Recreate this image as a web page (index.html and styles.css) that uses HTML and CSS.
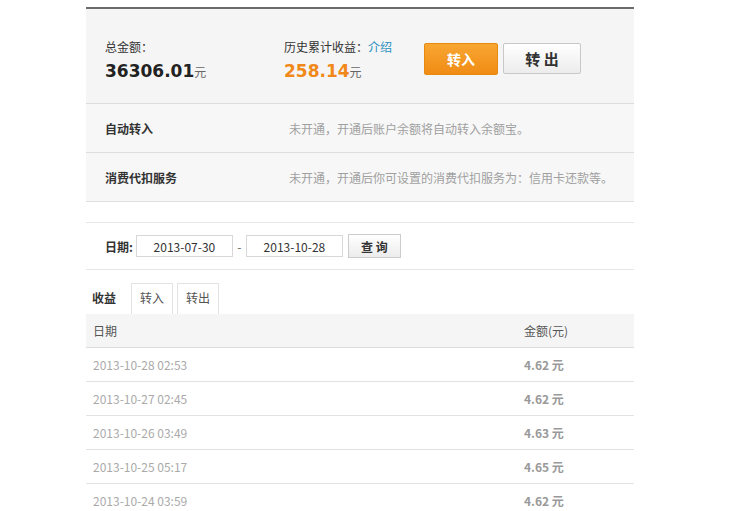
FILE: index.html
```html
<!DOCTYPE html>
<html>
  <head>
    <title>余额宝</title>
    <meta charset="UTF-8">
    <link rel="stylesheet" href="styles.css">
  </head>

  <body>
    <div class="wrap">
      <div class="summary">
        <div class="total">
          <div class="label">总金额：</div>
          <div class="amount">36306.01<span class="unit">元</span></div>
        </div>
        <div class="profit">
          <div class="label">历史累计收益：<a href="#">介绍</a></div>
          <div class="amount orange">258.14<span class="unit">元</span></div>
        </div>
        <div class="actions">
          <button class="btn-in">转入</button>
          <button class="btn-out">转 出</button>
        </div>
      </div>

      <div class="service">
        <div class="service-name">自动转入</div>
        <div class="service-desc">未开通，开通后账户余额将自动转入余额宝。</div>
      </div>
      <div class="service">
        <div class="service-name">消费代扣服务</div>
        <div class="service-desc">未开通，开通后你可设置的消费代扣服务为：信用卡还款等。</div>
      </div>

      <div class="filter">
        <span class="filter-label">日期:</span>
        <input class="date" type="text" value="2013-07-30">
        <span class="dash">-</span>
        <input class="date" type="text" value="2013-10-28">
        <button class="btn-query">查 询</button>
      </div>

      <div class="tabs">
        <div class="tab active">收益</div>
        <div class="tab">转入</div>
        <div class="tab">转出</div>
      </div>

      <table class="records">
        <thead>
          <tr><th>日期</th><th class="money">金额(元)</th></tr>
        </thead>
        <tbody>
          <tr><td>2013-10-28 02:53</td><td class="money">4.62 元</td></tr>
          <tr><td>2013-10-27 02:45</td><td class="money">4.62 元</td></tr>
          <tr><td>2013-10-26 03:49</td><td class="money">4.63 元</td></tr>
          <tr><td>2013-10-25 05:17</td><td class="money">4.65 元</td></tr>
          <tr><td>2013-10-24 03:59</td><td class="money">4.62 元</td></tr>
        </tbody>
      </table>
    </div>
  </body>
</html>
```

FILE: styles.css
```css
body {
  margin: 0;
  padding: 0;
  background-color: #fff;
  font-family: "Noto Sans CJK SC", "Liberation Sans", sans-serif;
  font-size: 12px;
  color: #333;
}

.wrap {
  width: 548px;
  margin: 7px 0 0 86px;
}

.summary {
  display: flex;
  height: 94px;
  padding: 0 0 0 19px;
  background-color: #f5f5f5;
  border-top: 2px solid #6b6b6b;
  border-bottom: 1px solid #dcdcdc;
}

.total {
  width: 179px;
  padding-top: 29px;
}

.profit {
  width: 140px;
  padding-top: 29px;
}

.label {
  height: 18px;
  line-height: 18px;
  color: #333;
}

.label a {
  color: #2a8fbd;
  text-decoration: none;
}

.amount {
  margin-top: 3px;
  font-family: "DejaVu Sans", Verdana, sans-serif;
  font-size: 17px;
  font-weight: bold;
  color: #222;
  line-height: 24px;
}

.amount.orange {
  color: #f0891a;
}

.unit {
  font-family: "Noto Sans CJK SC", sans-serif;
  font-size: 12px;
  font-weight: normal;
  color: #666;
}

.actions {
  display: flex;
  padding-top: 34px;
}

button {
  font-family: "Noto Sans CJK SC", sans-serif;
  cursor: pointer;
}

.btn-in {
  width: 74px;
  height: 32px;
  border: 1px solid #e88a10;
  border-radius: 2px;
  background: linear-gradient(#f8a632, #f08c15);
  color: #fff;
  font-size: 14px;
  font-weight: bold;
}

.btn-out {
  width: 78px;
  height: 31px;
  margin-left: 5px;
  border: 1px solid #c8c8c8;
  border-radius: 2px;
  background: linear-gradient(#ffffff, #ececec);
  color: #333;
  font-size: 15px;
  font-weight: bold;
}

.service {
  display: flex;
  align-items: center;
  height: 48px;
  padding-left: 19px;
  background-color: #f7f7f7;
  border-bottom: 1px solid #dedede;
}

.service-name {
  width: 184px;
  font-weight: bold;
  color: #333;
}

.service-desc {
  color: #a0a0a0;
}

.filter {
  display: flex;
  align-items: center;
  height: 46px;
  margin-top: 20px;
  padding-left: 19px;
  border-top: 1px solid #e6e6e6;
  border-bottom: 1px solid #e6e6e6;
}

.filter-label {
  margin-right: 3px;
  font-weight: bold;
  color: #333;
}

.date {
  width: 95px;
  height: 20px;
  padding: 0;
  border: 1px solid #d8d8d8;
  font-family: "Noto Sans CJK SC", "Liberation Sans", sans-serif;
  font-size: 12px;
  color: #333;
  text-align: center;
}

.dash {
  width: 13px;
  text-align: center;
  color: #666;
}

.btn-query {
  width: 53px;
  height: 24px;
  margin-left: 5px;
  border: 1px solid #ccc;
  background: linear-gradient(#fff, #ececec);
  color: #333;
  font-size: 12px;
  font-weight: bold;
}

.tabs {
  display: flex;
  margin-top: 13px;
  height: 31px;
}

.tab {
  width: 40px;
  height: 30px;
  line-height: 28px;
  margin-right: 4px;
  border: 1px solid #e3e3e3;
  border-bottom: none;
  text-align: center;
  color: #555;
}

.tab.active {
  width: 34px;
  margin-right: 4px;
  padding-left: 5px;
  border-color: transparent;
  text-align: left;
  font-weight: bold;
  color: #333;
}

.records {
  width: 100%;
  border-collapse: collapse;
}

.records th {
  height: 33px;
  padding: 0 0 0 7px;
  background-color: #f5f5f5;
  border-bottom: 1px solid #dcdcdc;
  text-align: left;
  font-weight: normal;
  color: #555;
}

.records td {
  height: 33px;
  padding: 0 0 0 7px;
  border-bottom: 1px solid #e2e2e2;
  color: #aaa;
  font-size: 12px;
}

.records .money {
  width: 110px;
}

.records td.money {
  font-weight: bold;
  color: #999;
}
```
